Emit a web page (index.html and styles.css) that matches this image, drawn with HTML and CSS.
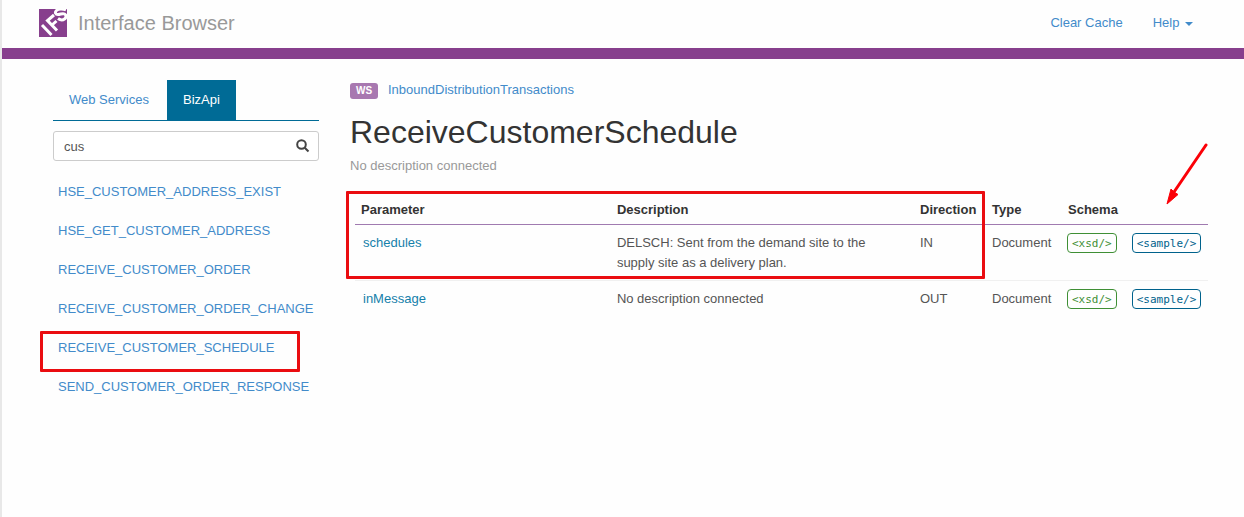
FILE: index.html
```html
<!DOCTYPE html>
<html lang="en">

<head>
    <meta charset="UTF-8">
    <meta name="viewport" content="width=device-width, initial-scale=1.0">
    <title>Interface Browser</title>
    <link rel="stylesheet" href="styles.css">
</head>

<body>
    <header class="header">
        <a class="brand" href="#">
            <svg class="logo" viewBox="0 0 28 28" aria-hidden="true">
                <rect width="28" height="28" fill="#873f8d" />
                <g fill="none" stroke="#fff" stroke-width="3">
                    <path d="M3 16l9.500 10" />
                    <path d="M18 21.500l-9.500-10 6.500-5.500M13 16l4.500-4" />
                    <path d="M27 1c-3-1.500-7.500-1.500-9.500.5s-1 4 1.500 4 4.500-1.500 6.500-.5 2 3.500 0 5-4.500 1-6.500-.5" />
                </g>
            </svg>
            <span>Interface Browser</span>
        </a>
        <nav class="header-nav">
            <a href="#">Clear Cache</a>
            <a href="#">Help <span class="caret"></span></a>
        </nav>
    </header>

    <div class="content">
        <aside class="sidebar">
            <nav class="tabs">
                <a href="#">Web Services</a>
                <a class="active" href="#">BizApi</a>
            </nav>
            <div class="search">
                <input type="text" value="cus" aria-label="Search">
                <svg viewBox="0 0 14 14" aria-hidden="true">
                    <circle cx="5.500" cy="5.500" r="4.300" />
                    <path d="M8.700 8.700l3.800 3.800" />
                </svg>
            </div>
            <ul class="api-list">
                <li><a href="#">HSE_CUSTOMER_ADDRESS_EXIST</a></li>
                <li><a href="#">HSE_GET_CUSTOMER_ADDRESS</a></li>
                <li><a href="#">RECEIVE_CUSTOMER_ORDER</a></li>
                <li><a href="#">RECEIVE_CUSTOMER_ORDER_CHANGE</a></li>
                <li class="marked"><a href="#">RECEIVE_CUSTOMER_SCHEDULE</a></li>
                <li><a href="#">SEND_CUSTOMER_ORDER_RESPONSE</a></li>
            </ul>
        </aside>

        <main>
            <div class="service">
                <span class="badge">WS</span>
                <a href="#">InboundDistributionTransactions</a>
            </div>
            <h1>ReceiveCustomerSchedule</h1>
            <p class="description">No description connected</p>
            <div class="params">
                <table>
                    <thead>
                        <tr>
                            <th class="col-name">Parameter</th>
                            <th>Description</th>
                            <th class="col-direction">Direction</th>
                            <th class="col-type">Type</th>
                            <th class="col-schema">Schema</th>
                        </tr>
                    </thead>
                    <tbody>
                        <tr>
                            <td class="name"><a href="#">schedules</a></td>
                            <td class="text">DELSCH: Sent from the demand site to the supply site as a delivery plan.</td>
                            <td>IN</td>
                            <td>Document</td>
                            <td class="schema">
                                <div class="buttons">
                                    <button class="xsd">&lt;xsd/&gt;</button>
                                    <button class="sample">&lt;sample/&gt;</button>
                                </div>
                            </td>
                        </tr>
                        <tr>
                            <td class="name"><a href="#">inMessage</a></td>
                            <td class="text">No description connected</td>
                            <td>OUT</td>
                            <td>Document</td>
                            <td class="schema">
                                <div class="buttons">
                                    <button class="xsd">&lt;xsd/&gt;</button>
                                    <button class="sample">&lt;sample/&gt;</button>
                                </div>
                            </td>
                        </tr>
                    </tbody>
                </table>
                <div class="highlight"></div>
                <svg class="arrow" viewBox="0 0 42 62" aria-hidden="true">
                    <path d="M40 2L8 49" stroke="#fb0007" stroke-width="3" stroke-linecap="round" />
                    <path d="M1 61L5 46 8 49 12 51.500z" fill="#fb0007" stroke="#fb0007" stroke-linejoin="round" />
                </svg>
            </div>
        </main>
    </div>
</body>

</html>
```

FILE: styles.css
```css
*,
*::after {
    box-sizing: border-box;
}

body {
    margin: 0;
    min-height: 100vh;
    border-left: 2px solid #e8e8e8;
    background-color: #fefefe;
    font-family: "Liberation Sans", Arial, sans-serif;
    font-size: 13px;
    line-height: 20px;
    color: #555;
}

a {
    color: #428bca;
    text-decoration: none;
}

.header {
    display: flex;
    justify-content: space-between;
    align-items: center;
    height: 59px;
    padding: 0 51px 2px 37px;
    border-bottom: 11px solid #873f8d;
}

.brand {
    display: flex;
    align-items: center;
    gap: 11px;
    font-size: 20px;
    color: #999;
}

.logo {
    width: 28px;
    height: 28px;
}

.header-nav {
    display: flex;
    gap: 30px;
}

.caret {
    display: inline-block;
    margin-left: 2px;
    vertical-align: middle;
    border-top: 4px solid;
    border-left: 4px solid transparent;
    border-right: 4px solid transparent;
}

.content {
    display: grid;
    grid-template-columns: 266px 1fr;
    gap: 31px;
    padding: 21px 36px 0 51px;
}

.tabs {
    display: flex;
    gap: 2px;
    border-bottom: 1px solid #006b96;
}

.tabs a {
    padding: 10px 16px;
}

.tabs .active {
    background-color: #006b96;
    color: #fff;
}

.search {
    position: relative;
    margin: 10px 0 11px;
}

.search input {
    display: block;
    width: 100%;
    height: 30px;
    padding: 0 30px 0 10px;
    border: 1px solid #ccc;
    border-radius: 3px;
    background-color: #fff;
    font: inherit;
    color: #555;
}

.search svg {
    position: absolute;
    top: 8px;
    right: 9px;
    width: 14px;
    height: 14px;
    fill: none;
    stroke: #444;
    stroke-width: 2;
}

.api-list {
    margin: 0;
    padding: 0;
    list-style: none;
}

.api-list li {
    position: relative;
    padding: 10px 5px;
}

.api-list li + li {
    margin-top: -1px;
}

.marked::after {
    content: "";
    position: absolute;
    top: 3px;
    left: -13px;
    width: 260px;
    height: 41px;
    border: 3px solid #ea0c10;
    border-radius: 1px;
    pointer-events: none;
}

.service {
    display: flex;
    align-items: center;
    gap: 10px;
}

.badge {
    width: 28px;
    margin-top: 2px;
    border-radius: 3px;
    background-color: #a878b0;
    color: #fff;
    font-size: 10px;
    font-weight: bold;
    line-height: 16px;
    text-align: center;
}

h1 {
    margin: 12px 0 4px;
    font-size: 32px;
    font-weight: normal;
    line-height: 40px;
    color: #333;
}

.description {
    margin: 0;
    color: #999;
}

.params {
    position: relative;
    margin: 20px 0 0 5px;
}

table {
    width: 100%;
    border-collapse: collapse;
    table-layout: fixed;
}

th,
td {
    padding: 8px 6px 7px;
    text-align: left;
    vertical-align: top;
}

th {
    padding: 4px 6px;
    border-bottom: 1px solid #a07ab0;
    color: #333;
}

td {
    border-bottom: 1px solid #f0f0f0;
}

tr:last-child td {
    border-bottom: none;
}

.col-name {
    width: 30%;
}

.col-direction {
    width: 72px;
}

.col-type {
    width: 76px;
}

.col-schema {
    width: 146px;
}

.name {
    padding-left: 8px;
}

.name a {
    color: #1580aa;
}

.text {
    padding-right: 40px;
}

.schema {
    padding-left: 5px;
}

.buttons {
    display: flex;
    gap: 15px;
}

.buttons button {
    height: 20px;
    padding: 0 4px;
    border: 1px solid;
    border-radius: 4px;
    background: none;
    font-family: "DejaVu Sans Mono", monospace;
    font-size: 11px;
}

.buttons .xsd {
    color: #3f8f35;
}

.buttons .sample {
    color: #00628c;
}

.highlight {
    position: absolute;
    top: -5px;
    left: -9px;
    right: 223px;
    height: 88px;
    border: 3px solid #ea0c10;
    border-radius: 1px;
    pointer-events: none;
}

.arrow {
    position: absolute;
    top: -53px;
    right: 0;
    width: 42px;
    height: 62px;
    pointer-events: none;
}
```
